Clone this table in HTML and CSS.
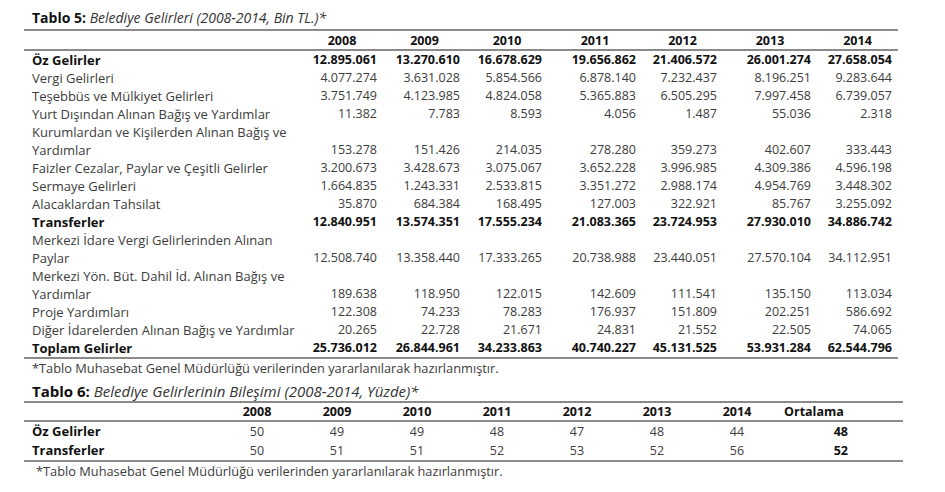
FILE: index.html
```html
<!DOCTYPE html>
<html lang="tr">
<head>
<meta charset="utf-8">
<link rel="stylesheet" href="styles.css">
</head>
<body>
<div class="page">
  <div class="caption t1"><b>Tablo 5:</b> <i>Belediye Gelirleri (2008-2014, Bin TL.)*</i></div>
  <table class="tbl tbl5">
    <colgroup>
      <col class="c-label"><col style="width:82px"><col style="width:83px"><col style="width:82px"><col style="width:94px"><col style="width:81px"><col style="width:94px"><col style="width:81px">
    </colgroup>
    <thead>
      <tr><th></th><th>2008</th><th>2009</th><th>2010</th><th>2011</th><th>2012</th><th>2013</th><th>2014</th></tr>
    </thead>
    <tbody>
      <tr class="bold"><td>Öz Gelirler</td><td>12.895.061</td><td>13.270.610</td><td>16.678.629</td><td>19.656.862</td><td>21.406.572</td><td>26.001.274</td><td>27.658.054</td></tr>
      <tr><td>Vergi Gelirleri</td><td>4.077.274</td><td>3.631.028</td><td>5.854.566</td><td>6.878.140</td><td>7.232.437</td><td>8.196.251</td><td>9.283.644</td></tr>
      <tr><td>Teşebbüs ve Mülkiyet Gelirleri</td><td>3.751.749</td><td>4.123.985</td><td>4.824.058</td><td>5.365.883</td><td>6.505.295</td><td>7.997.458</td><td>6.739.057</td></tr>
      <tr><td>Yurt Dışından Alınan Bağış ve Yardımlar</td><td>11.382</td><td>7.783</td><td>8.593</td><td>4.056</td><td>1.487</td><td>55.036</td><td>2.318</td></tr>
      <tr class="wrap"><td>Kurumlardan ve Kişilerden Alınan Bağış ve<br>Yardımlar</td><td>153.278</td><td>151.426</td><td>214.035</td><td>278.280</td><td>359.273</td><td>402.607</td><td>333.443</td></tr>
      <tr><td>Faizler Cezalar, Paylar ve Çeşitli Gelirler</td><td>3.200.673</td><td>3.428.673</td><td>3.075.067</td><td>3.652.228</td><td>3.996.985</td><td>4.309.386</td><td>4.596.198</td></tr>
      <tr><td>Sermaye Gelirleri</td><td>1.664.835</td><td>1.243.331</td><td>2.533.815</td><td>3.351.272</td><td>2.988.174</td><td>4.954.769</td><td>3.448.302</td></tr>
      <tr><td>Alacaklardan Tahsilat</td><td>35.870</td><td>684.384</td><td>168.495</td><td>127.003</td><td>322.921</td><td>85.767</td><td>3.255.092</td></tr>
      <tr class="bold"><td>Transferler</td><td>12.840.951</td><td>13.574.351</td><td>17.555.234</td><td>21.083.365</td><td>23.724.953</td><td>27.930.010</td><td>34.886.742</td></tr>
      <tr class="wrap"><td>Merkezi İdare Vergi Gelirlerinden Alınan<br>Paylar</td><td>12.508.740</td><td>13.358.440</td><td>17.333.265</td><td>20.738.988</td><td>23.440.051</td><td>27.570.104</td><td>34.112.951</td></tr>
      <tr class="wrap"><td>Merkezi Yön. Büt. Dahil İd. Alınan Bağış ve<br>Yardımlar</td><td>189.638</td><td>118.950</td><td>122.015</td><td>142.609</td><td>111.541</td><td>135.150</td><td>113.034</td></tr>
      <tr><td>Proje Yardımları</td><td>122.308</td><td>74.233</td><td>78.283</td><td>176.937</td><td>151.809</td><td>202.251</td><td>586.692</td></tr>
      <tr><td>Diğer İdarelerden Alınan Bağış ve Yardımlar</td><td>20.265</td><td>22.728</td><td>21.671</td><td>24.831</td><td>21.552</td><td>22.505</td><td>74.065</td></tr>
      <tr class="bold"><td>Toplam Gelirler</td><td>25.736.012</td><td>26.844.961</td><td>34.233.863</td><td>40.740.227</td><td>45.131.525</td><td>53.931.284</td><td>62.544.796</td></tr>
    </tbody>
  </table>
  <div class="note n1">*Tablo Muhasebat Genel Müdürlüğü verilerinden yararlanılarak hazırlanmıştır.</div>

  <div class="caption t2"><b>Tablo 6:</b> <i>Belediye Gelirlerinin Bileşimi (2008-2014, Yüzde)*</i></div>
  <table class="tbl tbl6">
    <colgroup>
      <col class="c-label6"><col class="c80"><col class="c80"><col class="c80"><col class="c80"><col class="c80"><col class="c80"><col class="c80"><col class="c-avg">
    </colgroup>
    <thead>
      <tr><th></th><th>2008</th><th>2009</th><th>2010</th><th>2011</th><th>2012</th><th>2013</th><th>2014</th><th class="avg-h">Ortalama</th></tr>
    </thead>
    <tbody>
      <tr><td class="lbl">Öz Gelirler</td><td>50</td><td>49</td><td>49</td><td>48</td><td>47</td><td>48</td><td>44</td><td class="avg">48</td></tr>
      <tr><td class="lbl">Transferler</td><td>50</td><td>51</td><td>51</td><td>52</td><td>53</td><td>52</td><td>56</td><td class="avg">52</td></tr>
    </tbody>
  </table>
  <div class="note n2">*Tablo Muhasebat Genel Müdürlüğü verilerinden yararlanılarak hazırlanmıştır.</div>
</div>
</body>
</html>
```
FILE: styles.css
```css
html, body {
  margin: 0;
  padding: 0;
  background: #ffffff;
}
body {
  font-family: "Open Sans", "Noto Sans", "Liberation Sans", sans-serif;
  font-size: 13px;
  color: #3c3c3c;
}
.page {
  padding: 9px 0 0 24px;
}
.caption {
  padding-left: 8px;
  height: 20px;
  line-height: 18px;
  font-size: 14px;
  color: #1e1e1e;
}
.caption b { font-weight: 700; color: #111; }
.caption i { font-style: italic; color: #333; }

.tbl {
  border-collapse: collapse;
  table-layout: fixed;
}
.tbl th, .tbl td {
  padding: 0;
  white-space: nowrap;
}
.tbl thead tr {
  border-top: 2px solid #8a8a8a;
  border-bottom: 2px solid #8a8a8a;
}
.tbl th {
  font-weight: 700;
  color: #111;
  text-align: center;
  font-size: 12.5px;
}
.tbl tbody tr:last-child {
  border-bottom: 2px solid #8a8a8a;
}

/* Tablo 5 */
.tbl5 { width: 874px; }
.tbl5 .c-label { width: 277px; }
.tbl5 thead tr { height: 20px; }
.tbl5 tbody tr { height: 18px; }
.tbl5 tbody tr.wrap { height: 36px; }
.tbl5 td {
  text-align: right;
  padding-right: 6px;
  line-height: 18px;
  vertical-align: bottom;
  font-size: 12.5px;
}
.tbl5 td:first-child {
  text-align: left;
  padding-left: 8px;
  padding-right: 0;
  font-size: 13px;
}
.tbl5 tr.bold td {
  font-weight: 700;
  color: #111;
}

.note {
  padding-left: 8px;
  line-height: 18px;
  color: #3c3c3c;
  font-size: 12.8px;
}
.n1 { height: 20px; }
.t2 { height: 22px; line-height: 24px; font-size: 15px; }
.n2 { padding-left: 12px; line-height: 18px; }

/* Tablo 6 */
.tbl6 { width: 879px; }
.tbl6 .c-label6 { width: 193px; }
.tbl6 .c80 { width: 80px; }
.tbl6 .c-avg { width: 126px; }
.tbl6 thead tr { height: 19px; }
.tbl6 tbody tr { height: 19px; }
.tbl6 td {
  text-align: center;
  line-height: 19px;
  font-size: 12.5px;
}
.tbl6 td.lbl {
  text-align: left;
  padding-left: 8px;
  font-weight: 700;
  color: #111;
  font-size: 13px;
}
.tbl6 th.avg-h {
  text-align: left;
  padding-left: 7px;
}
.tbl6 td.avg {
  text-align: right;
  padding-right: 55px;
  font-weight: 700;
  color: #111;
}
```
